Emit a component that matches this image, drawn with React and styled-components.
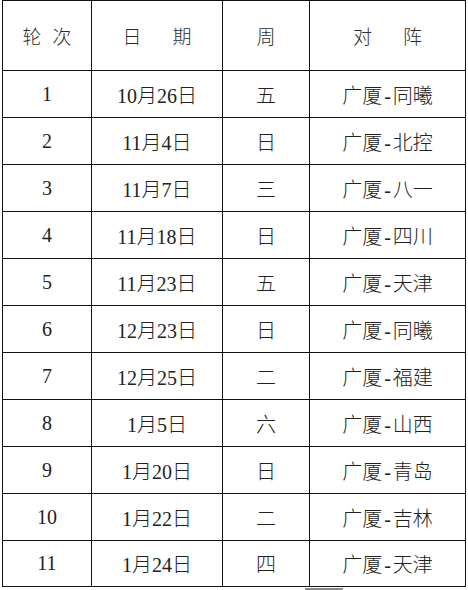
import React from "react";
import styled, { createGlobalStyle } from "styled-components";

const GlobalStyle = createGlobalStyle`
  html, body {
    margin: 0;
    padding: 0;
    background: #fff;
  }
`;

const Page = styled.div`
  width: 468px;
  height: 590px;
  overflow: hidden;
  background: #fff;
  padding: 0 0 0 2px;
  box-sizing: border-box;
`;

const Table = styled.table`
  border-collapse: collapse;
  table-layout: fixed;
  width: 463px;
  font-family: "Liberation Serif", "Noto Sans CJK SC", serif;
  color: #222;
`;

const Col = styled.col`
  width: ${(p) => p.$w}px;
`;

const Row = styled.tr`
  height: ${(p) => p.$h}px;
`;

const Cell = styled.td`
  border: 1.6px solid #111;
  padding: 0;
  text-align: center;
  vertical-align: middle;
  font-size: 20px;
  font-weight: 300;
  white-space: nowrap;
`;

const HeadCell = styled(Cell).attrs({ as: "th" })`
  font-size: 19px;
  font-weight: 300;
  color: #2e2e2e;
`;

const Spaced = styled.span`
  display: inline-flex;
  gap: ${(p) => p.$gap}px;
  justify-content: center;
`;

const Dash = styled.span`
  display: inline-block;
  margin: 0 2px;
`;

const Footer = styled.div`
  display: flex;
  padding: 1px 0 0 303px;
`;

const Scrap = styled.div`
  width: 38px;
  height: 3px;
  background: #8a8a8a;
`;

const rows = [
  ["1", "10月26日", "五", "同曦"],
  ["2", "11月4日", "日", "北控"],
  ["3", "11月7日", "三", "八一"],
  ["4", "11月18日", "日", "四川"],
  ["5", "11月23日", "五", "天津"],
  ["6", "12月23日", "日", "同曦"],
  ["7", "12月25日", "二", "福建"],
  ["8", "1月5日", "六", "山西"],
  ["9", "1月20日", "日", "青岛"],
  ["10", "1月22日", "二", "吉林"],
  ["11", "1月24日", "四", "天津"],
];

export default function App() {
  return (
    <>
      <GlobalStyle />
      <Page>
        <Table>
          <colgroup>
            <Col $w={89} />
            <Col $w={131} />
            <Col $w={87} />
            <Col $w={156} />
          </colgroup>
          <thead>
            <Row $h={70}>
              <HeadCell>
                <Spaced $gap={11}>
                  <span>轮</span>
                  <span>次</span>
                </Spaced>
              </HeadCell>
              <HeadCell>
                <Spaced $gap={31}>
                  <span>日</span>
                  <span>期</span>
                </Spaced>
              </HeadCell>
              <HeadCell>周</HeadCell>
              <HeadCell>
                <Spaced $gap={31}>
                  <span>对</span>
                  <span>阵</span>
                </Spaced>
              </HeadCell>
            </Row>
          </thead>
          <tbody>
            {rows.map(([n, date, day, team], i) => (
              <Row key={n} $h={i === rows.length - 1 ? 46 : 47}>
                <Cell>{n}</Cell>
                <Cell>{date}</Cell>
                <Cell>{day}</Cell>
                <Cell>
                  广厦<Dash>-</Dash>{team}
                </Cell>
              </Row>
            ))}
          </tbody>
        </Table>
        <Footer>
          <Scrap />
        </Footer>
      </Page>
    </>
  );
}
